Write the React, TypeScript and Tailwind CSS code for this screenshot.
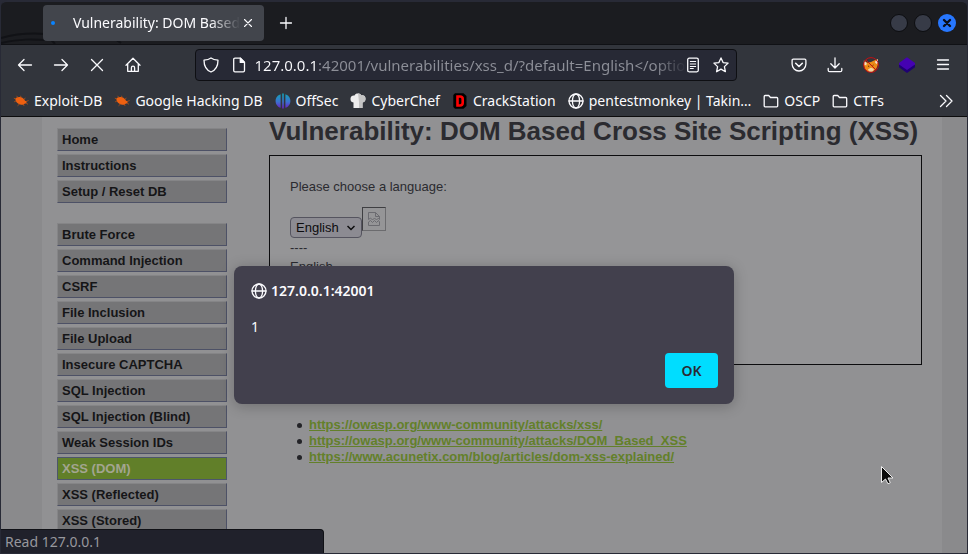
import type { ReactNode } from "react";

const UI = "font-['Noto_Sans',sans-serif]";

type IconProps = { children: ReactNode; className?: string };

function Icon({ children, className = "" }: IconProps) {
  return (
    <svg
      viewBox="0 0 16 16"
      className={`size-4 shrink-0 ${className}`}
      fill="none"
      stroke="currentColor"
      strokeWidth="1.3"
      strokeLinecap="round"
      strokeLinejoin="round"
      aria-hidden="true"
    >
      {children}
    </svg>
  );
}

function GlobeIcon() {
  return (
    <Icon>
      <circle cx="8" cy="8" r="7" />
      <ellipse cx="8" cy="8" rx="3.6" ry="7" />
      <path d="M1 8h14" />
    </Icon>
  );
}

function BugIcon() {
  return (
    <svg viewBox="0 0 16 16" className="size-4 shrink-0" aria-hidden="true">
      <path
        d="M2.500 5.800C3 4.300 5.500 3.500 8 4.300c2 .6 3.400 2 4 3.400 1.200.2 1.800.8 1.600 1.600-.2.900-1 1.300-1.700 1.200-.8 1.200-2.700 1.700-4.700 1.100C4.400 10.800 2 8 2.500 5.800z"
        fill="#ee6010"
      />
      <path
        d="M3 6L.8 5.200M3 8L1.200 8.800M5 4.500L3.500 2.800M8 4.500L7.600 2.800M11 6.500l1.300-1.700M13 8.500l2.600-1M13 10l2 1.300M10 11l1.200 2M6.500 11l-2 1.800"
        stroke="#c9540f"
        strokeWidth=".7"
      />
    </svg>
  );
}

function FolderIcon() {
  return (
    <Icon>
      <path d="M1.200 13V3.400c0-.5.4-.9.9-.9h3.600l1.800 2h6.200c.6 0 1 .4 1 .9V13c0 .5-.4.8-.9.8H2.100c-.5 0-.9-.3-.9-.8z" />
    </Icon>
  );
}

function OffSecIcon() {
  return (
    <svg viewBox="0 0 16 16" className="size-4 shrink-0" aria-hidden="true">
      <defs>
        <linearGradient id="offsec" x1="0" y1="0" x2="0" y2="1">
          <stop offset="0" stopColor="#12a5b5" />
          <stop offset=".55" stopColor="#3b72d0" />
          <stop offset="1" stopColor="#6a1fc4" />
        </linearGradient>
      </defs>
      <path
        d="M5.600 1.200v13.600C2.800 14 .6 11.400.6 8s2.200-6 5-6.800zM10.400 1.200v13.600c2.800-.8 5-3.400 5-6.800s-2.200-6-5-6.800zM7.200.6h1.600v14.800H7.200z"
        fill="url(#offsec)"
      />
    </svg>
  );
}

function ChefIcon() {
  return (
    <svg viewBox="0 0 16 16" className="size-4 shrink-0" aria-hidden="true">
      <path d="M3.500 15V9.500C1 9.300.4 7.400.5 5.500.7 3.300 2.500 2 4.500 2.500 5.200 1 6.600.5 8 .6c1.400 0 2.700.6 3.400 1.900 2-.6 4 .6 4.100 3 .1 2-.8 3.700-3 4V15z" fill="#ededed" />
      <path d="M8 .6c1.400 0 2.700.6 3.400 1.900 2-.6 4 .6 4.100 3 .1 2-.8 3.700-3 4V15H9V9z" fill="#c4c4c4" />
    </svg>
  );
}

function CrackIcon() {
  return (
    <svg viewBox="0 0 16 16" className="size-4 shrink-0" aria-hidden="true">
      <path d="M3 .3h8.500L14.500 3v10l-3 2.800H3L1.300 14V2z" fill="#000" />
      <path d="M5.500 3.500H8c1.700 0 2.700 1 2.700 2.400v4.200c0 1.500-1 2.400-2.700 2.400H5.500z" fill="none" stroke="#f00" strokeWidth="2.600" />
    </svg>
  );
}

function Bookmark({ icon, label }: { icon: ReactNode; label: string }) {
  return (
    <a href="#" className="flex shrink-0 items-center gap-[5px]">
      {icon}
      <span>{label}</span>
    </a>
  );
}

function ToolButton({ label, children }: { label: string; children: ReactNode }) {
  return (
    <button type="button" aria-label={label} className="flex size-9 shrink-0 items-center justify-center">
      {children}
    </button>
  );
}

function TitleBar() {
  return (
    <header className="relative flex h-[45px] shrink-0 items-center overflow-hidden rounded-t-md border-t-2 border-b border-t-[#282a36] border-b-[#101115] bg-[#1b1c20] pl-[42px] pr-[11px]">
      <svg className="absolute bottom-0 left-0 h-3 w-32" viewBox="0 0 128 12" fill="none" stroke="#111216" strokeWidth="2" aria-hidden="true">
        <path d="M0 6C18 1 30 1 44 2M0 11c20-4 30-4 44-3M44 1l10 11M90 0c10 1 22 5 30 11" />
      </svg>
      <div role="tab" className="relative flex h-9 w-[221px] items-center rounded bg-[#42454c] px-2 text-[#fbfbfe]">
        <span className="size-1 rounded-full bg-[#0a84ff]" />
        <span className="ml-[18px] w-[168px] whitespace-nowrap [mask-image:linear-gradient(to_right,black_82%,transparent)]">
          Vulnerability: DOM Based
        </span>
        <button type="button" aria-label="Close tab" className="ml-auto">
          <Icon>
            <path d="M4.500 4.500l7 7M11.500 4.500l-7 7" strokeWidth="1.100" />
          </Icon>
        </button>
      </div>
      <button type="button" aria-label="New tab" className="relative ml-[14px] text-[#fbfbfe]">
        <Icon>
          <path d="M8 2.500v11M2.500 8h11" />
        </Icon>
      </button>
      <div className="ml-auto flex items-center gap-1.5">
        <button type="button" aria-label="Minimize" className="size-[18px] rounded-full border border-[#0c0d10] bg-[#373b47]" />
        <button type="button" aria-label="Maximize" className="size-[18px] rounded-full border border-[#0c0d10] bg-[#373b47]" />
        <button type="button" aria-label="Close" className="flex size-[18px] items-center justify-center rounded-full bg-[#2777ff] text-[#0b0f1c]">
          <Icon>
            <path d="M5 5l6 6M11 5l-6 6" strokeWidth="2.400" />
          </Icon>
        </button>
      </div>
    </header>
  );
}

function AddressBar() {
  return (
    <form className="flex h-8 w-[542px] items-center rounded border border-[#0e0f13] bg-[#272935] pr-[7px] pl-[7px]" onSubmit={(e) => e.preventDefault()}>
      <Icon>
        <path d="M8 1c2 1.500 4.300 2 7 2.200 0 5.600-1.800 9.600-7 11.800C2.800 12.800 1 8.800 1 3.200 3.700 3 6 2.500 8 1z" />
      </Icon>
      <Icon className="ml-3">
        <path d="M2.700 2.500c0-.8.5-1.300 1.300-1.300h5.500l4 4v8.300c0 .8-.5 1.300-1.300 1.300H4c-.8 0-1.300-.5-1.300-1.300z" />
        <path d="M9.300 1.300v4.100h4.100z" fill="currentColor" />
      </Icon>
      {/* The host part is bright, the path is dimmed and fades out at the right edge. */}
      <input
        aria-label="Address"
        defaultValue="127.0.0.1:42001/vulnerabilities/xss_d/?default=English</optio"
        className="ml-2 h-full min-w-0 flex-1 bg-[linear-gradient(to_right,#fbfbfe_64px,#8d8f98_64px,#8d8f98_400px,#2c2e3a_430px)] bg-clip-text text-[15px] text-transparent caret-white outline-none"
      />
      <button type="button" aria-label="Reader view">
        <Icon>
          <rect x="2.700" y="1.200" width="10.600" height="13.600" rx="1.500" />
          <path d="M5.300 4.500h5.400M5.300 7h5.400M5.300 9.500h5.400M5.300 11.500h3" strokeWidth="1" />
        </Icon>
      </button>
      <button type="button" aria-label="Bookmark page" className="ml-3">
        <Icon>
          <path d="M8 .9l2.100 4.700 5 .5-3.700 3.500 1 5.100L8 12.100l-4.400 2.600 1-5.100L.9 6.100l5-.5z" />
        </Icon>
      </button>
    </form>
  );
}

function NavBar() {
  return (
    <nav className="flex h-10 shrink-0 items-center bg-[#32353c] px-1.5 text-[#fbfbfe]">
      <ToolButton label="Back">
        <Icon>
          <path d="M14.500 8h-13M7 2.500L1.500 8 7 13.500" />
        </Icon>
      </ToolButton>
      <ToolButton label="Forward">
        <Icon>
          <path d="M1.500 8h13M9 2.500L14.500 8 9 13.500" />
        </Icon>
      </ToolButton>
      <ToolButton label="Stop">
        <Icon>
          <path d="M2.500 2.500l11 11M13.500 2.500l-11 11" />
        </Icon>
      </ToolButton>
      <ToolButton label="Home">
        <Icon>
          <path d="M1 8.200L8 1.200l7 7M2.700 6.800v7.500h10.600V6.800M6.400 14.300v-3.500c0-.9.700-1.600 1.600-1.600s1.600.7 1.600 1.600v3.500" />
        </Icon>
      </ToolButton>
      <div className="flex min-w-0 flex-1 justify-center pr-px">
        <AddressBar />
      </div>
      <ToolButton label="Save to Pocket">
        <Icon>
          <path d="M2.300 2.200h11.400c.7 0 1.200.5 1.200 1.200v3.700a6.900 6.900 0 0 1-13.800 0V3.400c0-.7.5-1.200 1.200-1.200z" />
          <path d="M4.700 6.300L8 9.500l3.300-3.200" strokeWidth="1.600" />
        </Icon>
      </ToolButton>
      <ToolButton label="Downloads">
        <Icon>
          <path d="M8 .8v10M3.800 6.800L8 11l4.200-4.200M1.200 11.500v1.700c0 .9.600 1.500 1.500 1.500h10.600c.9 0 1.500-.6 1.500-1.500v-1.700" />
        </Icon>
      </ToolButton>
      <ToolButton label="Proxy disabled">
        <svg viewBox="0 0 16 16" className="size-4" aria-hidden="true">
          <path d="M1 3.500l3.500 2.300L8 5l3-1.500 3.500-1.300.5 5-1.500 4L10 14.800H5L2 12 .8 8z" fill="#ec8a16" />
          <path d="M.8 3.500l3 2.700-.6 2.300-2-1zM14.800 2l-3 3 1.500 2 1.700-1z" fill="#f3ddc6" />
          <path d="M5 12.200l3-1.500 3 1.200-1.500 2.900H6z" fill="#f1d3a8" />
          <path d="M5 9l1.200.5M10.500 8l-1 .8" stroke="#5b2a07" />
          <circle cx="8" cy="8" r="7.400" fill="none" stroke="#c40f12" strokeWidth="1" />
          <path d="M2.800 2.800l10.400 10.400" stroke="#c40f12" />
        </svg>
      </ToolButton>
      <ToolButton label="Extension">
        <svg viewBox="0 0 16 16" className="size-4" aria-hidden="true">
          <path d="M0 7.500v2.800L8 16l8-5.700V7.500z" fill="#1f0173" />
          <path d="M8 .3l8 5.700v1.500L8 13 0 7.500V6z" fill="#4502b2" />
        </svg>
      </ToolButton>
      <ToolButton label="Open application menu">
        <Icon>
          <path d="M2.500 3h11M2.500 7.500h11M2.500 12h11" />
        </Icon>
      </ToolButton>
    </nav>
  );
}

function BookmarksBar() {
  return (
    <nav aria-label="Bookmarks" className="flex h-8 shrink-0 items-center gap-3 border-b border-[#0c0c0d] bg-[#32353c] pt-px pr-3 pl-3 text-[#fbfbfe]">
      <Bookmark icon={<BugIcon />} label="Exploit-DB" />
      <Bookmark icon={<BugIcon />} label="Google Hacking DB" />
      <Bookmark icon={<OffSecIcon />} label="OffSec" />
      <Bookmark icon={<ChefIcon />} label="CyberChef" />
      <Bookmark icon={<CrackIcon />} label="CrackStation" />
      <Bookmark icon={<GlobeIcon />} label="pentestmonkey | Takin…" />
      <Bookmark icon={<FolderIcon />} label="OSCP" />
      <Bookmark icon={<FolderIcon />} label="CTFs" />
      <button type="button" aria-label="More bookmarks" className="ml-auto">
        <Icon>
          <path d="M1.500 2.500L7 8l-5.500 5.500M7.500 2.500L13 8l-5.500 5.500" />
        </Icon>
      </button>
    </nav>
  );
}

const menuGroups = [
  ["Home", "Instructions", "Setup / Reset DB"],
  [
    "Brute Force",
    "Command Injection",
    "CSRF",
    "File Inclusion",
    "File Upload",
    "Insecure CAPTCHA",
    "SQL Injection",
    "SQL Injection (Blind)",
    "Weak Session IDs",
    "XSS (DOM)",
    "XSS (Reflected)",
    "XSS (Stored)",
  ],
];

const activeItem = "XSS (DOM)";

function SideMenu() {
  return (
    <aside className="flex w-[170px] shrink-0 flex-col gap-5 pt-[11px]">
      {menuGroups.map((items) => (
        <ul key={items[0]} className="flex flex-col gap-[3px]">
          {items.map((item) => (
            <li key={item}>
              <a
                href="#"
                className={
                  item === activeItem
                    ? "block h-[23px] border border-[#4d566b] bg-[#617f29] pl-1 text-[13px] leading-[21px] font-bold text-[#a3a590]"
                    : "block h-[23px] border border-t-[#858587] border-r-[#4d5166] border-b-[#4d5166] border-l-[#858587] bg-[#757577] pl-1 text-[13px] leading-[21px] font-bold text-[#151517]"
                }
              >
                {item}
              </a>
            </li>
          ))}
        </ul>
      ))}
    </aside>
  );
}

const links = [
  "https://owasp.org/www-community/attacks/xss/",
  "https://owasp.org/www-community/attacks/DOM_Based_XSS",
  "https://www.acunetix.com/blog/articles/dom-xss-explained/",
];

function MainContent() {
  return (
    <main className="mr-5 ml-[42px] min-w-0 flex-1 text-[13px] leading-4 text-[#2b2b30]">
      <h1 className="text-[26px] leading-7 font-bold whitespace-nowrap">Vulnerability: DOM Based Cross Site Scripting (XSS)</h1>
      <section className="mt-[10px] h-[210px] border border-[#0c0c0e] bg-[#959597] px-5 pt-[23px]">
        <label htmlFor="language">Please choose a language:</label>
        <div className="mt-3 flex items-end">
          <div className="relative h-[21px] w-[72px]">
            <select id="language" className="size-full appearance-none rounded border border-[#55545f] bg-[#8c8b92] pl-[5px] text-[13px] leading-[19px] text-[#0c0c0e]">
              <option>English</option>
              <option>French</option>
              <option>Spanish</option>
              <option>German</option>
            </select>
            <svg viewBox="0 0 8 6" className="pointer-events-none absolute top-2 right-[7px] h-1.5 w-2" fill="none" stroke="#0c0c0e" strokeWidth="1.500" aria-hidden="true">
              <path d="M.5 1L4 4.500 7.500 1" />
            </svg>
          </div>
          <span role="img" aria-label="Missing picture" className="mb-[7px] flex size-6 items-center justify-center border border-t-[#3f3f42] border-r-[#6b6b6e] border-b-[#6b6b6e] border-l-[#3f3f42] text-[#6b6b70]">
            <svg viewBox="0 0 14 16" className="h-4 w-[14px]" fill="none" stroke="currentColor" aria-hidden="true">
              <path d="M1.500 8.500v-7h7l4 4v3M8.500 1.500v4h4M1.500 8.500l2-1.500 2 2 2-2 2 2 2-2 1 1.500M1.500 14.500V11l2-1.500 2 2 2-2 2 2 2-2 1 1.500v3.500z" />
            </svg>
          </span>
        </div>
        <p className="mt-[2px]">----</p>
        <p className="mt-[3px]">English</p>
      </section>
      <h2 className="mt-4 text-lg leading-5 font-bold">More Information</h2>
      <ul className="mt-4 pl-7 font-bold">
        {links.map((link) => (
          <li key={link} className="flex items-center gap-[7px]">
            <span className="size-[5px] rounded-full bg-[#232327]" />
            <a href="#" className="text-[#63802a] underline">
              {link}
            </a>
          </li>
        ))}
      </ul>
    </main>
  );
}

function AlertDialog() {
  return (
    <div
      role="dialog"
      aria-labelledby="alert-origin"
      className={`absolute inset-x-0 top-[149px] mx-auto flex w-[500px] flex-col rounded-lg bg-[#42404d] py-4 pr-4 pl-[17px] text-[14px] leading-5 text-[#fbfbfe] shadow-[0_2px_14px_rgba(12,12,13,0.25)] ${UI}`}
    >
      <h2 id="alert-origin" className="flex items-center gap-1 leading-[18px] font-semibold">
        <GlobeIcon />
        127.0.0.1:42001
      </h2>
      <p className="mt-[17px]">1</p>
      <button type="button" className="mt-4 h-[35px] w-[53px] self-end rounded bg-[#00ddff] font-semibold text-[#2b2a33]">
        OK
      </button>
    </div>
  );
}

function Cursor() {
  return (
    <svg viewBox="0 0 14 20" className="absolute top-[348px] right-[73px] h-5 w-[14px]" aria-hidden="true">
      <path d="M1.500 1.500v16l4-3.500 2.500 4.800 2.300-1.100L8 13h5z" fill="#0a0a0a" stroke="#ededed" />
    </svg>
  );
}

export default function App() {
  return (
    <div className={`flex h-screen flex-col overflow-hidden border-x border-b border-[#282a36] bg-[#282a36] text-[14px] leading-5 ${UI}`}>
      <TitleBar />
      <NavBar />
      <BookmarksBar />
      <div className="relative flex min-h-0 flex-1 overflow-hidden bg-[#8a8a8c] pr-[25px] pl-[41px] font-['Liberation_Sans',sans-serif]">
        <div className="flex min-w-0 flex-1 bg-[#919193] pl-[15px]">
          <SideMenu />
          <MainContent />
        </div>
        <AlertDialog />
        <Cursor />
        <p className={`absolute bottom-0 left-0 h-6 w-[323px] rounded-tr border-t border-r border-[#101116] bg-[#20212b] pl-1 text-[14px] leading-6 text-[#97979d] ${UI}`}>
          Read 127.0.0.1
        </p>
      </div>
    </div>
  );
}
